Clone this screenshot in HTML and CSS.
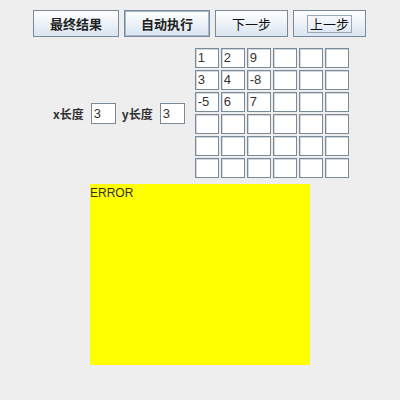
FILE: index.html
```html
<!DOCTYPE html>
<html>
<head>
<meta charset="utf-8">
<link rel="stylesheet" href="styles.css">
</head>
<body>
<div class="app">
  <div class="toolbar">
    <button class="btn wide">最终结果</button>
    <button class="btn wide default">自动执行</button>
    <button class="btn narrow plain">下一步</button>
    <button class="btn narrow plain"><span class="focus">上一步</span></button>
  </div>
  <div class="middle">
    <span class="lbl">x长度</span>
    <div class="field">3</div>
    <span class="lbl">y长度</span>
    <div class="field">3</div>
    <div class="grid">
      <div class="cell">1</div><div class="cell">2</div><div class="cell">9</div><div class="cell"></div><div class="cell"></div><div class="cell"></div>
      <div class="cell">3</div><div class="cell">4</div><div class="cell">-8</div><div class="cell"></div><div class="cell"></div><div class="cell"></div>
      <div class="cell">-5</div><div class="cell">6</div><div class="cell">7</div><div class="cell"></div><div class="cell"></div><div class="cell"></div>
      <div class="cell"></div><div class="cell"></div><div class="cell"></div><div class="cell"></div><div class="cell"></div><div class="cell"></div>
      <div class="cell"></div><div class="cell"></div><div class="cell"></div><div class="cell"></div><div class="cell"></div><div class="cell"></div>
      <div class="cell"></div><div class="cell"></div><div class="cell"></div><div class="cell"></div><div class="cell"></div><div class="cell"></div>
    </div>
  </div>
  <div class="output">ERROR</div>
</div>
</body>
</html>
```
FILE: styles.css
```css
html, body {
  margin: 0;
  padding: 0;
  background: #eeeeee;
  width: 400px;
  height: 400px;
  overflow: hidden;
  font-family: "Liberation Sans", "Noto Sans CJK SC", sans-serif;
}
.app {
  display: flex;
  flex-direction: column;
}
.toolbar {
  display: flex;
  gap: 5px;
  padding: 10px 0 0 33px;
}
.btn {
  box-sizing: border-box;
  height: 27px;
  margin: 0;
  padding: 0;
  border: 1px solid #7a8a99;
  background: linear-gradient(#ffffff 0%, #f2f6fa 35%, #d9e5f1 100%);
  font-family: "Noto Sans CJK SC", sans-serif;
  font-size: 13px;
  font-weight: bold;
  color: #222;
  display: flex;
  align-items: center;
  justify-content: center;
}
.wide { width: 86px; }
.narrow { width: 73px; }
.default {
  box-shadow: inset 0 0 0 1px #a3b8cc;
}
.plain { font-weight: normal; color: #111; }
.focus {
  border: 1px solid #99a8b8;
  padding: 0 2px;
  line-height: 16px;
}
.middle {
  display: flex;
  align-items: center;
  padding: 11px 0 0 53px;
}
.lbl {
  font-family: "Noto Sans CJK SC", sans-serif;
  font-size: 12px;
  font-weight: bold;
  color: #333;
  margin-right: 7px;
}
.field {
  box-sizing: border-box;
  width: 25px;
  height: 21px;
  border: 1px solid #7a8a99;
  background: #fff;
  font-size: 13px;
  color: #333;
  line-height: 19px;
  padding-left: 2px;
  margin-right: 6px;
}
.grid {
  display: grid;
  grid-template-columns: repeat(6, 24px);
  grid-auto-rows: 20px;
  gap: 2px;
  margin-left: 4px;
}
.cell {
  box-sizing: border-box;
  border: 1px solid #7a8a99;
  box-shadow: inset 1px 1px 0 #d4d8dc;
  background: #fff;
  font-size: 13px;
  color: #333;
  line-height: 18px;
  padding-left: 2px;
}
.output {
  margin: 6px 0 0 90px;
  width: 220px;
  height: 181px;
  background: #ffff00;
  font-size: 12px;
  color: #333;
  line-height: 18px;
}
```
